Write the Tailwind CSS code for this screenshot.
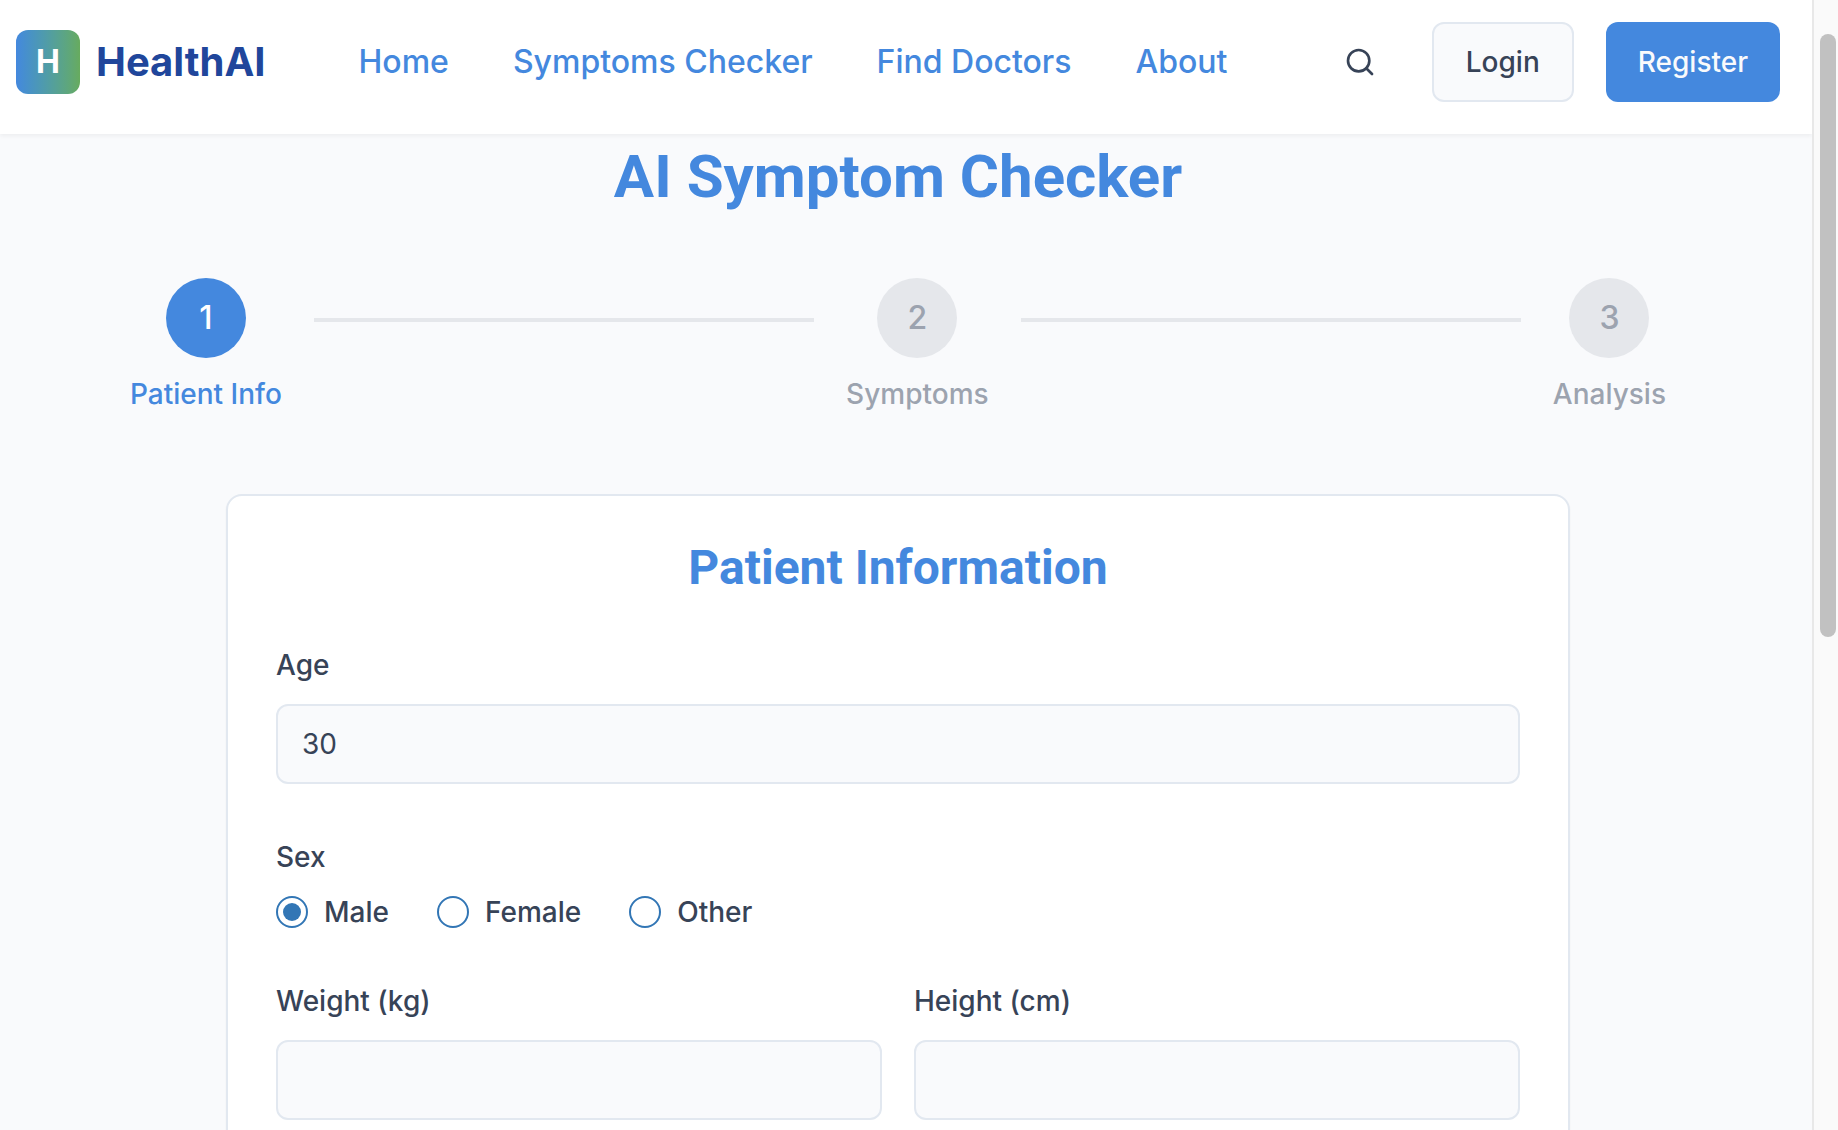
<!DOCTYPE html>
<html lang="en">

<head>
    <meta charset="UTF-8">
    <meta name="viewport" content="width=device-width, initial-scale=1.0">
    <title>AI Symptom Checker - HealthAI</title>
    <script src="https://cdn.jsdelivr.net/npm/@tailwindcss/browser@4"></script>
</head>

<body class="h-screen overflow-hidden flex bg-[#f9fafc] font-[Inter,sans-serif] text-[28px] leading-10 text-[#374357]">
    <div class="flex-1 min-w-0 overflow-hidden">
        <header class="flex items-center bg-white pt-[22px] pb-8 pl-4 pr-8 shadow-[0_2px_4px_rgba(0,0,0,0.05)]">
            <a href="/" class="flex items-center gap-4">
                <span class="size-16 rounded-xl bg-linear-to-r from-[#4488de] to-[#67ab5e] flex items-center justify-center text-[32px] font-bold text-white">H</span>
                <span class="text-[40px] font-bold text-[#20469b]">HealthAI</span>
            </a>
            <nav class="ml-[93px] flex gap-16 text-[32px] font-medium text-[#4488de] whitespace-nowrap">
                <a href="/">Home</a>
                <a href="/symptoms">Symptoms Checker</a>
                <a href="/doctors">Find Doctors</a>
                <a href="/about">About</a>
            </nav>
            <div class="ml-auto flex items-center gap-8">
                <button type="button" aria-label="Search" class="size-20 flex items-center justify-center">
                    <svg class="size-8" viewBox="0 0 24 24" fill="none" stroke="currentColor" stroke-width="2" stroke-linecap="round" stroke-linejoin="round">
                        <circle cx="11" cy="11" r="8" />
                        <path d="m21 21-4.3-4.3" />
                    </svg>
                </button>
                <button type="button" class="h-20 px-8 rounded-xl border-2 border-[#e2e8f0] bg-[#f9fafc] font-medium">Login</button>
                <button type="button" class="h-20 px-8 rounded-xl bg-[#4488de] font-medium text-[#f9fafc]">Register</button>
            </div>
        </header>

        <main class="pt-2 pl-4 pr-8">
            <h1 class="mb-[66px] text-center font-[Roboto,sans-serif] text-[60px] leading-[70px] font-bold text-[#4488de]">AI Symptom Checker</h1>

            <ol class="max-w-[1536px] mx-auto mb-20 flex items-start gap-8 font-medium text-[#9ca3af]">
                <li class="flex flex-col items-center gap-4 text-[#4488de]">
                    <span class="size-20 rounded-full bg-[#4488de] flex items-center justify-center text-[32px] text-white">1</span>
                    <span>Patient Info</span>
                </li>
                <li aria-hidden="true" class="flex-1 mt-10 h-1 bg-gray-200"></li>
                <li class="flex flex-col items-center gap-4">
                    <span class="size-20 rounded-full bg-gray-200 flex items-center justify-center text-[32px]">2</span>
                    <span>Symptoms</span>
                </li>
                <li aria-hidden="true" class="flex-1 mt-10 h-1 bg-gray-200"></li>
                <li class="flex flex-col items-center gap-4">
                    <span class="size-20 rounded-full bg-gray-200 flex items-center justify-center text-[32px]">3</span>
                    <span>Analysis</span>
                </li>
            </ol>

            <form class="max-w-[1344px] mx-auto flex flex-col gap-[53px] p-12 bg-white border-2 border-[#e2e8f0] rounded-2xl shadow-xs font-medium">
                <h2 class="text-center font-[Roboto,sans-serif] text-[48px] leading-[48px] font-bold text-[#4488de]">Patient Information</h2>

                <div class="flex flex-col gap-[19px]">
                    <label for="age">Age</label>
                    <input id="age" type="text" inputmode="numeric" value="30" class="w-full h-20 px-6 rounded-xl border-2 border-[#e2e8f0] bg-[#f9fafc] font-normal">
                </div>

                <fieldset>
                    <legend class="mb-[19px]">Sex</legend>
                    <div class="flex gap-12 leading-8">
                        <label class="flex items-center gap-4">
                            <input type="radio" name="sex" value="male" checked class="appearance-none size-8 rounded-full border-2 border-[#3276b5] bg-white checked:bg-[#3276b5] checked:bg-clip-content checked:p-[5px]">
                            Male
                        </label>
                        <label class="flex items-center gap-4">
                            <input type="radio" name="sex" value="female" class="appearance-none size-8 rounded-full border-2 border-[#3276b5] bg-white checked:bg-[#3276b5] checked:bg-clip-content checked:p-[5px]">
                            Female
                        </label>
                        <label class="flex items-center gap-4">
                            <input type="radio" name="sex" value="other" class="appearance-none size-8 rounded-full border-2 border-[#3276b5] bg-white checked:bg-[#3276b5] checked:bg-clip-content checked:p-[5px]">
                            Other
                        </label>
                    </div>
                </fieldset>

                <div class="grid grid-cols-2 gap-8">
                    <div class="flex flex-col gap-[19px]">
                        <label for="weight">Weight (kg)</label>
                        <input id="weight" type="text" inputmode="numeric" class="w-full h-20 px-6 rounded-xl border-2 border-[#e2e8f0] bg-[#f9fafc] font-normal">
                    </div>
                    <div class="flex flex-col gap-[19px]">
                        <label for="height">Height (cm)</label>
                        <input id="height" type="text" inputmode="numeric" class="w-full h-20 px-6 rounded-xl border-2 border-[#e2e8f0] bg-[#f9fafc] font-normal">
                    </div>
                </div>
            </form>
        </main>
    </div>

    <!-- scrollbar -->
    <div aria-hidden="true" class="w-[26px] shrink-0 border-l-2 border-[#e8e8e8] bg-[#fafafa] pt-[34px] pl-[6px]">
        <div class="w-4 h-[603px] rounded-full bg-[#c1c1c1]"></div>
    </div>
</body>

</html>
